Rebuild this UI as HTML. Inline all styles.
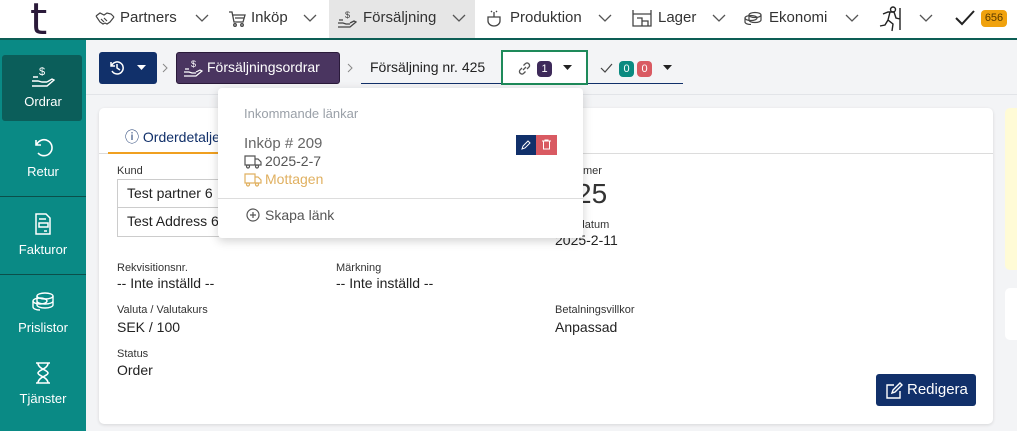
<!DOCTYPE html>
<html><head><meta charset="utf-8"><style>
*{box-sizing:border-box;margin:0;padding:0}
body{width:1017px;height:431px;overflow:hidden;background:#f3f4f6;font-family:"Liberation Sans",sans-serif;color:#222;position:relative}
.a{position:absolute;white-space:nowrap}
.top{left:0;top:0;width:1017px;height:40px;background:#fff;border-bottom:2px solid #0d5e55}
.nav{top:9px;font-size:15px;color:#333}
.chev{top:13px}
.side{left:0;top:40px;width:86px;height:391px;background:#0a8a85}
.sb{color:#fff;font-size:13px;text-align:center;width:86px;left:0}
.ic{left:33px}
.lbl{font-size:11px;color:#333}
.val{font-size:14px;color:#222}
svg{display:block}
</style></head><body>
<div class="a top"></div>
<div class="a" style="left:30px;top:-6px;font-size:44px;color:#2b1a3a;font-family:'DejaVu Sans',sans-serif">t</div>
<svg class="a" style="left:95px;top:11px" width="20" height="16" viewBox="0 0 20 16" fill="none" stroke="#444" stroke-width="1.2"><path d="M1 5l4-3 4 2 3-2 4 1 3 3M1 5l4 6 3 2 2-1 2 1 3-2 4-5M6 8l3 3M9 7l3 3"/></svg>
<div class="a nav" style="left:120px">Partners</div>
<svg class="a chev" style="left:195px" width="14" height="10" viewBox="0 0 14 10"><path d="M1 2l6 6 6-6" stroke="#555" fill="none" stroke-width="1.3"/></svg>
<svg class="a" style="left:228px;top:10px" width="18" height="18" viewBox="0 0 18 18" fill="none" stroke="#444" stroke-width="1.3"><path d="M1 2h3l2 10h9l2-7H5M7 8h9"/><circle cx="7" cy="15" r="1.3"/><circle cx="14" cy="15" r="1.3"/></svg>
<div class="a nav" style="left:251px">Inköp</div>
<svg class="a chev" style="left:303px" width="14" height="10" viewBox="0 0 14 10"><path d="M1 2l6 6 6-6" stroke="#555" fill="none" stroke-width="1.3"/></svg>
<div class="a" style="left:329px;top:0;width:146px;height:38px;background:#e6e6e6"></div>
<svg class="a" style="left:337px;top:9px" width="20" height="20" viewBox="0 0 20 20" fill="none" stroke="#444" stroke-width="1.3"><path d="M1 14h5l3 1h4M1 18h12l6-5-2-1-4 2M2 11h4"/><text x="8" y="9" font-size="9" fill="#444" stroke="none" font-family="Liberation Sans">$</text></svg>
<div class="a nav" style="left:363px">Försäljning</div>
<svg class="a chev" style="left:452px" width="14" height="10" viewBox="0 0 14 10"><path d="M1 2l6 6 6-6" stroke="#555" fill="none" stroke-width="1.3"/></svg>
<svg class="a" style="left:486px;top:9px" width="16" height="18" viewBox="0 0 16 18" fill="none" stroke="#444" stroke-width="1.3"><path d="M2 8h12v4a6 5 0 0 1-12 0zM8 3v5M5 2l1 1M11 2l-1 1"/></svg>
<div class="a nav" style="left:510px">Produktion</div>
<svg class="a chev" style="left:598px" width="14" height="10" viewBox="0 0 14 10"><path d="M1 2l6 6 6-6" stroke="#555" fill="none" stroke-width="1.3"/></svg>
<svg class="a" style="left:632px;top:9px" width="20" height="18" viewBox="0 0 20 18" fill="none" stroke="#444" stroke-width="1.3"><path d="M1 1v16h18V1M1 5h18M5 9h5v8M10 12h6v5"/></svg>
<div class="a nav" style="left:658px">Lager</div>
<svg class="a chev" style="left:712px" width="14" height="10" viewBox="0 0 14 10"><path d="M1 2l6 6 6-6" stroke="#555" fill="none" stroke-width="1.3"/></svg>
<svg class="a" style="left:744px;top:11px" width="18" height="14" viewBox="0 0 18 14" fill="none" stroke="#444" stroke-width="1.2"><ellipse cx="11" cy="4" rx="6" ry="2.5"/><path d="M5 4v5c0 1.4 2.7 2.5 6 2.5s6-1.1 6-2.5V4"/><ellipse cx="7" cy="7" rx="6" ry="2.5"/><path d="M1 7v4c0 1.4 2.7 2.5 6 2.5"/></svg>
<div class="a nav" style="left:769px">Ekonomi</div>
<svg class="a chev" style="left:845px" width="14" height="10" viewBox="0 0 14 10"><path d="M1 2l6 6 6-6" stroke="#555" fill="none" stroke-width="1.3"/></svg>
<svg class="a" style="left:878px;top:6px" width="24" height="26" viewBox="0 0 24 26" fill="none" stroke="#222" stroke-width="1.4"><circle cx="15" cy="3.5" r="2.5"/><path d="M5 8l5-2h6l2 6 4 1M12 6l-2 8 5 4-1 7M10 14l-3 5-5 1M22 2v22"/></svg>
<svg class="a chev" style="left:919px" width="14" height="10" viewBox="0 0 14 10"><path d="M1 2l6 6 6-6" stroke="#555" fill="none" stroke-width="1.3"/></svg>
<svg class="a" style="left:955px;top:10px" width="20" height="16" viewBox="0 0 20 16"><path d="M1 8l6 6L19 1" stroke="#222" fill="none" stroke-width="2"/></svg>
<div class="a" style="left:981px;top:10px;width:26px;height:17px;background:#f0a20e;border-radius:4px;font-size:11px;color:#5a3a00;text-align:center;line-height:17px">656</div>

<div class="a side"></div>
<div class="a" style="left:2px;top:55px;width:80px;height:66px;background:#0b5e5a;border-radius:3px"></div>
<svg class="a" style="left:31px;top:64px" width="24" height="24" viewBox="0 0 24 24" fill="none" stroke="#fff" stroke-width="1.4"><path d="M1 17h6l4 1h5M1 22h15l7-6-2-1-5 3M2 13h5"/><text x="8" y="11" font-size="11" fill="#fff" stroke="none" font-family="Liberation Sans">$</text></svg>
<div class="a sb" style="top:94px">Ordrar</div>
<svg class="a" style="left:32px;top:136px" width="22" height="22" viewBox="0 0 22 22" fill="none" stroke="#fff" stroke-width="1.6"><path d="M4 4v5h5M4.5 9A8 8 0 1 1 6 17"/></svg>
<div class="a sb" style="top:164px">Retur</div>
<div class="a" style="left:0;top:196px;width:86px;height:1px;background:#0b4f4a"></div>
<svg class="a" style="left:34px;top:213px" width="18" height="22" viewBox="0 0 18 22" fill="none" stroke="#fff" stroke-width="1.5"><path d="M2 1h10l4 4v16H2zM5 6h7M5 10h9v4H5zM10 18h3"/></svg>
<div class="a sb" style="top:242px">Fakturor</div>
<div class="a" style="left:0;top:274px;width:86px;height:1px;background:#0b4f4a"></div>
<svg class="a" style="left:31px;top:292px" width="24" height="20" viewBox="0 0 24 20" fill="none" stroke="#fff" stroke-width="1.4"><ellipse cx="14" cy="4" rx="8" ry="3"/><path d="M6 4v9c0 1.6 3.6 3 8 3s8-1.4 8-3V4M6 9c0 1.6 3.6 3 8 3s8-1.4 8-3"/><ellipse cx="9" cy="9" rx="7" ry="3"/><path d="M2 9v6c0 1.6 3 3 7 3"/></svg>
<div class="a sb" style="top:320px">Prislistor</div>
<svg class="a" style="left:35px;top:362px" width="16" height="22" viewBox="0 0 16 22" fill="none" stroke="#fff" stroke-width="1.6"><path d="M1 1h14M1 21h14M3 1c0 6 10 7 10 10S3 15 3 21M13 1c0 6-10 7-10 10s10 4 10 10"/></svg>
<div class="a sb" style="top:391px">Tjänster</div>

<!-- breadcrumb -->
<div class="a" style="left:99px;top:52px;width:58px;height:32px;background:#11306a;border-radius:3px"></div>
<svg class="a" style="left:109px;top:60px" width="16" height="16" viewBox="0 0 16 16" fill="none" stroke="#fff" stroke-width="1.5"><path d="M2 2v4h4M2.5 6A6 6 0 1 1 3 11M8 4v4l3 2"/></svg>
<svg class="a" style="left:137px;top:65px" width="9" height="5" viewBox="0 0 9 5"><path d="M0 0h9L4.5 5z" fill="#fff"/></svg>
<svg class="a" style="left:162px;top:63px" width="6" height="10" viewBox="0 0 6 10"><path d="M1 1l4 4-4 4" stroke="#888" fill="none"/></svg>
<div class="a" style="left:176px;top:52px;width:164px;height:32px;background:#4a3560;border:1px solid #2a1a3a;border-radius:3px"></div>
<svg class="a" style="left:183px;top:58px" width="20" height="20" viewBox="0 0 20 20" fill="none" stroke="#fff" stroke-width="1.2"><path d="M1 14h5l3 1h4M1 18h12l6-5-2-1-4 2M2 11h4"/><text x="8" y="9" font-size="9" fill="#fff" stroke="none" font-family="Liberation Sans">$</text></svg>
<div class="a" style="left:207px;top:59px;color:#fff;font-size:14px">Försäljningsordrar</div>
<svg class="a" style="left:347px;top:63px" width="6" height="10" viewBox="0 0 6 10"><path d="M1 1l4 4-4 4" stroke="#888" fill="none"/></svg>
<div class="a" style="left:361px;top:52px;width:322px;height:32px;border-bottom:1px solid #11306a"></div>
<div class="a" style="left:370px;top:59px;font-size:14px">Försäljning nr. 425</div>
<div class="a" style="left:501px;top:50px;width:87px;height:35px;border:2px solid #1e8a5a;background:#fff"></div>
<svg class="a" style="left:517px;top:61px" width="15" height="15" viewBox="0 0 15 15" fill="none" stroke="#555" stroke-width="1.3"><path d="M6 9l3-3M5 7l-2 2a2.5 2.5 0 0 0 3.5 3.5l2-2M10 8l2-2a2.5 2.5 0 0 0-3.5-3.5l-2 2"/></svg>
<div class="a" style="left:537px;top:61px;width:15px;height:16px;background:#3e2a5a;border-radius:4px;color:#fff;font-size:11px;text-align:center;line-height:16px">1</div>
<svg class="a" style="left:563px;top:65px" width="9" height="5" viewBox="0 0 9 5"><path d="M0 0h9L4.5 5z" fill="#222"/></svg>
<svg class="a" style="left:600px;top:63px" width="13" height="10" viewBox="0 0 13 10"><path d="M1 5l4 4 7-8" stroke="#444" fill="none" stroke-width="1.2"/></svg>
<div class="a" style="left:619px;top:61px;width:15px;height:16px;background:#0b8a80;border-radius:4px;color:#fff;font-size:11px;text-align:center;line-height:16px">0</div>
<div class="a" style="left:637px;top:61px;width:15px;height:16px;background:#d95a62;border-radius:4px;color:#fff;font-size:11px;text-align:center;line-height:16px">0</div>
<svg class="a" style="left:663px;top:65px" width="9" height="5" viewBox="0 0 9 5"><path d="M0 0h9L4.5 5z" fill="#222"/></svg>
<div class="a" style="left:86px;top:94px;width:931px;height:1px;background:#e2e4e8"></div>

<!-- card -->
<div class="a" style="left:99px;top:108px;width:894px;height:316px;background:#fff;border-radius:5px;box-shadow:0 1px 3px rgba(0,0,0,.12)"></div>
<div class="a" style="left:1005px;top:108px;width:12px;height:162px;background:#fffbd6;border-radius:5px 0 0 5px"></div>
<div class="a" style="left:1005px;top:288px;width:12px;height:52px;background:#fff;border-radius:5px 0 0 5px"></div>
<div class="a" style="left:99px;top:153px;width:894px;height:1px;background:#dcdcdc"></div>
<div class="a" style="left:108px;top:152px;width:120px;height:2px;background:#f0a020"></div>
<div class="a" style="left:125px;top:127px;font-size:14px;color:#11306a">ⓘ Orderdetaljer</div>
<div class="a lbl" style="left:117px;top:165px">Kund</div>
<div class="a" style="left:117px;top:179px;width:110px;height:58px;border:1px solid #ccc"></div>
<div class="a" style="left:117px;top:207px;width:110px;height:1px;background:#ccc"></div>
<div class="a val" style="left:127px;top:185px">Test partner 6</div>
<div class="a val" style="left:127px;top:213px">Test Address 6</div>
<div class="a lbl" style="left:583px;top:165px">mer</div>
<div class="a" style="left:576px;top:178px;font-size:28px;color:#333;font-weight:300">25</div>
<div class="a lbl" style="left:575px;top:219px">rdatum</div>
<div class="a val" style="left:555px;top:232px">2025-2-11</div>
<div class="a lbl" style="left:117px;top:262px">Rekvisitionsnr.</div>
<div class="a val" style="left:117px;top:275px">-- Inte inställd --</div>
<div class="a lbl" style="left:336px;top:262px">Märkning</div>
<div class="a val" style="left:336px;top:275px">-- Inte inställd --</div>
<div class="a lbl" style="left:117px;top:304px">Valuta / Valutakurs</div>
<div class="a val" style="left:117px;top:319px">SEK / 100</div>
<div class="a lbl" style="left:555px;top:304px">Betalningsvillkor</div>
<div class="a val" style="left:555px;top:319px">Anpassad</div>
<div class="a lbl" style="left:117px;top:348px">Status</div>
<div class="a val" style="left:117px;top:362px">Order</div>
<div class="a" style="left:876px;top:374px;width:100px;height:32px;background:#11306a;border-radius:3px"></div>
<svg class="a" style="left:885px;top:382px" width="18" height="18" viewBox="0 0 18 18" fill="none" stroke="#fff" stroke-width="1.4"><path d="M9 3H2v13h13V9M7 11l1-3 7-7 2 2-7 7z"/></svg>
<div class="a" style="left:907px;top:381px;color:#fff;font-size:15px">Redigera</div>

<!-- dropdown -->
<div class="a" style="left:218px;top:88px;width:365px;height:150px;background:#fff;border-radius:4px;box-shadow:0 3px 10px rgba(0,0,0,.18)"></div>
<div class="a" style="left:244px;top:106px;font-size:13px;color:#9aa0a8">Inkommande länkar</div>
<div class="a" style="left:244px;top:135px;font-size:15px;color:#666">Inköp # 209</div>
<svg class="a" style="left:244px;top:155px" width="18" height="14" viewBox="0 0 18 14" fill="none" stroke="#555" stroke-width="1.2"><path d="M1 1h10v9H1zM11 4h3l3 3v3h-6"/><circle cx="4" cy="11.5" r="1.5" fill="#fff"/><circle cx="13" cy="11.5" r="1.5" fill="#fff"/></svg>
<div class="a" style="left:265px;top:153px;font-size:14px;color:#555">2025-2-7</div>
<svg class="a" style="left:244px;top:173px" width="18" height="14" viewBox="0 0 18 14" fill="none" stroke="#e0b060" stroke-width="1.2"><path d="M1 1h10v9H1zM11 4h3l3 3v3h-6"/><circle cx="4" cy="11.5" r="1.5" fill="#fff"/><circle cx="13" cy="11.5" r="1.5" fill="#fff"/></svg>
<div class="a" style="left:265px;top:171px;font-size:14px;color:#e0b060">Mottagen</div>
<div class="a" style="left:516px;top:135px;width:20px;height:20px;background:#11306a"></div>
<svg class="a" style="left:521px;top:140px" width="10" height="10" viewBox="0 0 10 10" fill="none" stroke="#fff" stroke-width="1"><path d="M1 9l1-3 5-5 2 2-5 5z"/></svg>
<div class="a" style="left:536px;top:135px;width:21px;height:20px;background:#d95a62"></div>
<svg class="a" style="left:542px;top:139px" width="9" height="11" viewBox="0 0 9 11" fill="none" stroke="#fff" stroke-width="1"><path d="M0 2h9M3 2V1h3v1M1.5 2v8h6V2"/></svg>
<div class="a" style="left:218px;top:198px;width:365px;height:1px;background:#ddd"></div>
<svg class="a" style="left:246px;top:208px" width="14" height="14" viewBox="0 0 14 14" fill="none" stroke="#555" stroke-width="1.2"><circle cx="7" cy="7" r="6"/><path d="M7 4v6M4 7h6"/></svg>
<div class="a" style="left:265px;top:207px;font-size:14px;color:#555">Skapa länk</div>
</body></html>
